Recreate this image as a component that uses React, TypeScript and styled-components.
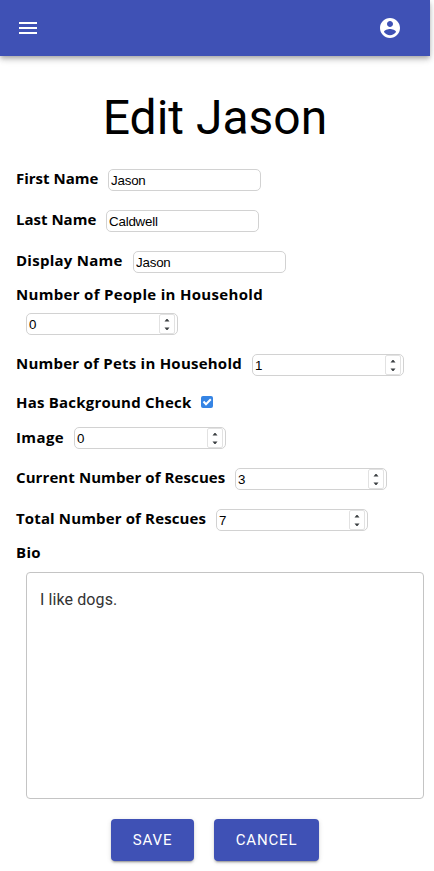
import React from 'react';
import styled, { createGlobalStyle } from 'styled-components';

const GlobalStyle = createGlobalStyle`
  *, *::before, *::after { box-sizing: border-box; }
  body { margin: 0; background: #fff; color: #000; overflow: hidden; }
`;

const Page = styled.div`
  width: 430px;
  height: 871px;
  display: flex;
  flex-direction: column;
`;

const AppBar = styled.header`
  height: 56px;
  flex: none;
  display: flex;
  align-items: center;
  justify-content: space-between;
  padding: 0 28px 0 16px;
  background: #3f51b5;
  box-shadow: 0 2px 4px -1px rgba(0, 0, 0, 0.2), 0 4px 5px 0 rgba(0, 0, 0, 0.14),
    0 1px 10px 0 rgba(0, 0, 0, 0.12);
`;

const IconButton = styled.button`
  width: 24px;
  height: 24px;
  padding: 0;
  border: 0;
  background: none;
  color: #fff;

  svg { display: block; fill: currentColor; }
`;

const Title = styled.h1`
  margin: 34px 0 13px;
  font: 400 48px/56px Roboto, sans-serif;
  text-align: center;
`;

const Form = styled.form`
  display: flex;
  flex-direction: column;
  padding: 0 6px 0 16px;
`;

const Row = styled.div<{ $h?: number }>`
  height: ${(p) => p.$h ?? 41}px;
  display: flex;
  align-items: center;
`;

const Label = styled.label<{ $w: number; $ls?: number; $drop?: number }>`
  flex: none;
  width: ${(p) => p.$w}px;
  margin-top: ${(p) => p.$drop ?? -3}px;
  font: 700 15px/22px 'Open Sans', sans-serif;
  letter-spacing: ${(p) => p.$ls ?? 0}px;
  white-space: nowrap;
`;

const Box = styled.div<{ $w?: number }>`
  width: ${(p) => p.$w ?? 153}px;
  height: 22px;
  margin-left: 10px;
  display: flex;
  border: 1px solid #d2d2d2;
  border-radius: 5px;
  overflow: hidden;
`;

const Field = styled.input`
  flex: 1;
  min-width: 0;
  height: 20px;
  padding: 1px 0 0 2px;
  border: 0;
  outline: 0;
  background: transparent;
  color: #000;
  font: 13.333px 'Liberation Sans', Arial, sans-serif;
  letter-spacing: -0.2px;
`;

const Spinner = styled.div`
  width: 16px;
  height: 20px;
  margin-right: 2px;
  border: 1px solid #e2e2e2;
  border-radius: 2px;

  svg { display: block; }
`;

const Check = styled.span`
  width: 12px;
  height: 12px;
  margin: 0 0 0 10px;
  border-radius: 2px;
  background: #3584e4;

  svg { display: block; }
`;

const Bio = styled.textarea`
  width: 398px;
  height: 227px;
  margin: 10px 0 0 10px;
  padding: 17px 13px;
  border: 1px solid #c4c4c4;
  border-radius: 4px;
  outline: 0;
  resize: none;
  background: #fff;
  color: #333;
  font: 400 16px/19px Roboto, sans-serif;
  letter-spacing: 0.1px;
`;

const Actions = styled.div`
  display: flex;
  justify-content: center;
  gap: 20px;
  margin: 20px 10px 0 0;
`;

const Button = styled.button<{ $w: number }>`
  width: ${(p) => p.$w}px;
  height: 42px;
  padding: 0;
  border: 0;
  border-radius: 4px;
  background: #3f51b5;
  color: #fff;
  font: 400 15px/26px Roboto, sans-serif;
  letter-spacing: 0.85px;
  text-transform: uppercase;
  box-shadow: 0 3px 1px -2px rgba(0, 0, 0, 0.2), 0 2px 2px 0 rgba(0, 0, 0, 0.14),
    0 1px 5px 0 rgba(0, 0, 0, 0.12);
`;

function NumberField({ value }: { value: number }) {
  return (
    <Box $w={152}>
      <Field defaultValue={value} inputMode="numeric" />
      <Spinner>
        <svg width="14" height="18" viewBox="0 0 14 18" fill="#3c4043">
          <path d="M4.5 6.500h5L7.500 4h-1zM4.500 12.500h5l-2 2.500h-1z" />
        </svg>
      </Spinner>
    </Box>
  );
}

function TextField({ value }: { value: string }) {
  return (
    <Box>
      <Field defaultValue={value} />
    </Box>
  );
}

export default function App() {
  return (
    <>
      <GlobalStyle />
      <Page>
        <AppBar>
          <IconButton aria-label="Menu">
            <svg width="24" height="24" viewBox="0 0 24 24">
              <path d="M3 18h18v-2H3v2zm0-5h18v-2H3v2zm0-7v2h18V6H3z" />
            </svg>
          </IconButton>
          <IconButton aria-label="Account">
            <svg width="24" height="24" viewBox="0 0 24 24">
              <path d="M12 2C6.480 2 2 6.480 2 12s4.480 10 10 10 10-4.480 10-10S17.520 2 12 2zm0 3c1.660 0 3 1.340 3 3s-1.340 3-3 3-3-1.340-3-3 1.340-3 3-3zm0 14.200c-2.500 0-4.710-1.280-6-3.220.03-1.990 4-3.080 6-3.080 1.990 0 5.970 1.090 6 3.080-1.290 1.940-3.500 3.220-6 3.220z" />
            </svg>
          </IconButton>
        </AppBar>
        <Title>Edit Jason</Title>
        <Form>
          <Row><Label $w={82}>First Name</Label><TextField value="Jason" /></Row>
          <Row><Label $w={80}>Last Name</Label><TextField value="Caldwell" /></Row>
          <Row><Label $w={107} $ls={0.25}>Display Name</Label><TextField value="Jason" /></Row>
          <Row $h={22}><Label $w={247} $ls={0.32} $drop={2}>Number of People in Household</Label></Row>
          <Row $h={40}><NumberField value={0} /></Row>
          <Row><Label $w={226} $ls={0.24}>Number of Pets in Household</Label><NumberField value={1} /></Row>
          <Row $h={33}>
            <Label $w={175} $ls={0.22} $drop={0}>Has Background Check</Label>
            <Check>
              <svg width="12" height="12" viewBox="0 0 12 12" fill="none" stroke="#fff" strokeWidth="2">
                <path d="M2.500 5.500L5 8.200l4.800-5" />
              </svg>
            </Check>
          </Row>
          <Row $h={40}><Label $w={48} $ls={0.4}>Image</Label><NumberField value={0} /></Row>
          <Row><Label $w={209} $ls={0.09}>Current Number of Rescues</Label><NumberField value={3} /></Row>
          <Row><Label $w={190} $ls={0.14}>Total Number of Rescues</Label><NumberField value={7} /></Row>
          <Row $h={22}><Label $w={25} $ls={0.3} $drop={1}>Bio</Label></Row>
          <Bio defaultValue="I like dogs." />
          <Actions>
            <Button type="button" $w={83}>Save</Button>
            <Button type="button" $w={105}>Cancel</Button>
          </Actions>
        </Form>
      </Page>
    </>
  );
}
